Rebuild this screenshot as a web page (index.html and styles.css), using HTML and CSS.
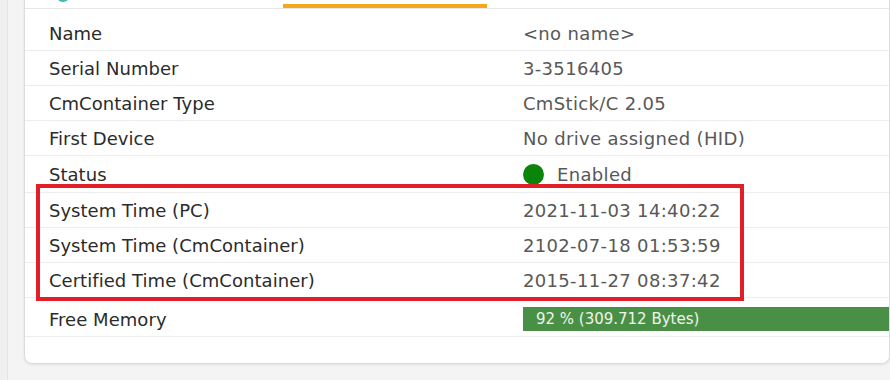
FILE: index.html
```html
<!DOCTYPE html>
<html>
<head>
<meta charset="utf-8">
<title>CmContainer</title>
<link rel="stylesheet" href="styles.css">
</head>
<body>
<div class="page">
  <div class="rail"></div>
  <div class="card">
    <div class="tabs">
      <div class="tab tab-icon">
        <svg width="12" height="4" viewBox="0 0 12 4"><circle cx="6" cy="-5" r="6" fill="none" stroke="#3cbcb0" stroke-width="2"/></svg>
      </div>
      <div class="tab tab-active"></div>
    </div>
    <div class="info">
      <div class="row"><div class="label">Name</div><div class="value">&lt;no name&gt;</div></div>
      <div class="row"><div class="label">Serial Number</div><div class="value">3-3516405</div></div>
      <div class="row"><div class="label">CmContainer Type</div><div class="value">CmStick/C 2.05</div></div>
      <div class="row"><div class="label">First Device</div><div class="value">No drive assigned (HID)</div></div>
      <div class="row row-status"><div class="label">Status</div><div class="value"><span class="dot"></span>Enabled</div></div>
      <div class="row"><div class="label">System Time (PC)</div><div class="value">2021-11-03 14:40:22</div></div>
      <div class="row"><div class="label">System Time (CmContainer)</div><div class="value">2102-07-18 01:53:59</div></div>
      <div class="row"><div class="label">Certified Time (CmContainer)</div><div class="value">2015-11-27 08:37:42</div></div>
      <div class="row row-mem"><div class="label">Free Memory</div><div class="value"><div class="bar">92 % (309.712 Bytes)</div></div></div>
    </div>
    <div class="highlight"></div>
  </div>
</div>
</body>
</html>
```

FILE: styles.css
```css
html, body{
margin: 0;
padding: 0;
}
body{
width: 890px;
height: 380px;
overflow: hidden;
background-color: #f4f4f4;
font-family: "DejaVu Sans", Verdana, sans-serif;
}
.page{
display: flex;
align-items: flex-start;
}
.rail{
width: 8px;
height: 380px;
background-color: #f0f0f0;
border-right: 1px solid #e4e4e4;
margin-right: 16px;
}
.card{
position: relative;
width: 1000px;
background-color: #ffffff;
border: 1px solid #dcdcdc;
border-top: none;
border-radius: 0 0 8px 8px;
box-shadow: 0 1px 3px rgba(0,0,0,0.08);
padding-bottom: 26px;
}
.tabs{
display: flex;
height: 8px;
border-bottom: 1px solid #e6e6e6;
}
.tab-icon{
width: 12px;
margin-left: 32px;
}
.tab-icon svg{
display: block;
}
.tab-active{
width: 204px;
height: 4px;
margin-top: 4px;
margin-left: 214px;
background-color: #f5a81c;
}
.info{
padding-top: 7px;
}
.row{
display: grid;
grid-template-columns: 474px 1fr;
align-items: center;
padding: 7px 0 6px 24px;
border-bottom: 1px solid #ececec;
font-size: 18px;
line-height: 21px;
}
.label{
color: #2b2b2b;
letter-spacing: 0.05px;
}
.value{
color: #585858;
letter-spacing: 0.35px;
display: flex;
align-items: center;
}
.row-status{
padding-top: 8px;
padding-bottom: 7px;
}
.dot{
width: 21px;
height: 21px;
border-radius: 50%;
background-color: #0a840a;
margin-right: 13px;
}
.row-mem{
padding-top: 9px;
padding-bottom: 5px;
}
.bar{
width: 100%;
height: 24px;
box-sizing: border-box;
padding-left: 13px;
background-color: #4a8f46;
color: #eef5ec;
font-size: 15px;
letter-spacing: 0;
line-height: 24px;
}
.highlight{
position: absolute;
left: 11px;
top: 184px;
width: 700px;
height: 109px;
border: 4px solid #e21f26;
}
```
